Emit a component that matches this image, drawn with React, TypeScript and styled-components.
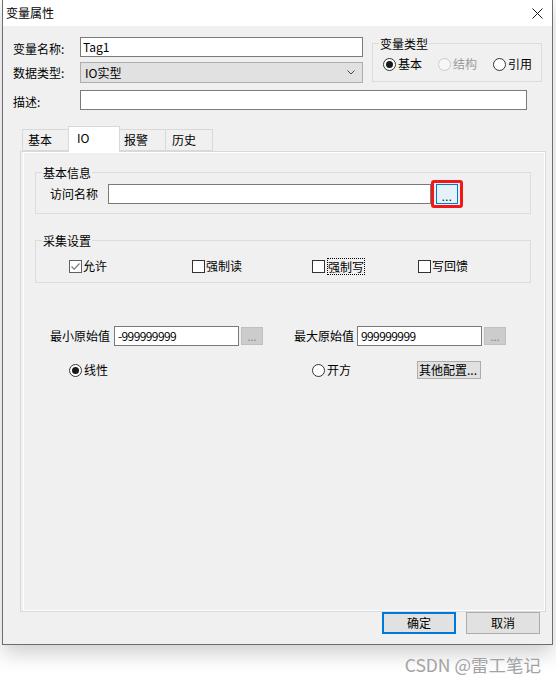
import React from "react";
import styled, { createGlobalStyle } from "styled-components";

const FONT = `"Noto Sans CJK SC", "Microsoft YaHei", "Noto Sans", sans-serif`;

const Global = createGlobalStyle`
  html, body { margin: 0; padding: 0; background: #fff; }
  body { font-family: ${FONT}; font-size: 12px; color: #000; }
  * { box-sizing: border-box; }
`;

const Page = styled.div`
  position: relative;
  width: 556px;
  height: 683px;
  overflow: hidden;
  background: #fff;
  padding-left: 2px;
`;

const Window = styled.div`
  width: 551px;
  height: 645px;
  border: 1px solid #6d6d6d;
  border-top: none;
  background: #f0f0f0;
  box-shadow: 0 8px 20px rgba(0, 0, 0, 0.2);
  display: flex;
  flex-direction: column;
`;

const TitleBar = styled.div`
  height: 26px;
  flex: none;
  background: #fff;
  display: flex;
  align-items: center;
  justify-content: space-between;
  padding: 0 9px 0 3px;
`;

const TitleText = styled.span`
  line-height: 16px;
`;

const Body = styled.div`
  flex: 1;
  display: flex;
  flex-direction: column;
  padding-top: 11px;
`;

const TopArea = styled.div`
  display: flex;
  align-items: flex-start;
  padding-left: 10px;
`;

const FieldColumn = styled.div`
  display: flex;
  flex-direction: column;
  gap: 5px;
`;

const FieldRow = styled.div<{ $mt?: number; $pl?: number }>`
  display: flex;
  align-items: center;
  margin-top: ${(p) => p.$mt ?? 0}px;
  padding-left: ${(p) => p.$pl ?? 0}px;
`;

const FieldLabel = styled.span<{ $w: number; $pt?: number; $ml?: number }>`
  width: ${(p) => p.$w}px;
  flex: none;
  line-height: 16px;
  white-space: nowrap;
  padding-top: ${(p) => p.$pt ?? 0}px;
  margin-left: ${(p) => p.$ml ?? 0}px;
`;

const TextBox = styled.div<{ $w: number; $h?: number; $num?: boolean }>`
  width: ${(p) => p.$w}px;
  height: ${(p) => p.$h ?? 20}px;
  flex: none;
  border: 1px solid #7a7a7a;
  background: #fff;
  padding: 0 3px 0 ${(p) => (p.$num ? 3 : 2)}px;
  display: flex;
  align-items: center;
  line-height: 16px;
  overflow: hidden;
  white-space: nowrap;
  letter-spacing: ${(p) => (p.$num ? "-0.6px" : "0")};
`;

const SelectBox = styled.div`
  width: 283px;
  height: 21px;
  flex: none;
  border: 1px solid #adadad;
  background: #e1e1e1;
  display: flex;
  align-items: center;
  justify-content: space-between;
  padding: 0 7px 0 4px;
  line-height: 16px;
`;

const GroupBox = styled.div<{ $w: number; $h: number; $mt?: number; $ml?: number }>`
  position: relative;
  flex: none;
  width: ${(p) => p.$w}px;
  height: ${(p) => p.$h}px;
  margin-top: ${(p) => p.$mt ?? 0}px;
  margin-left: ${(p) => p.$ml ?? 0}px;
  border: 1px solid #dcdcdc;
`;

const GroupTitle = styled.span`
  position: absolute;
  top: -8px;
  left: 6px;
  padding: 0 1px;
  background: #f0f0f0;
  line-height: 16px;
  white-space: nowrap;
`;

const GroupRow = styled.div<{ $pt: number; $pl: number }>`
  display: flex;
  align-items: center;
  padding: ${(p) => p.$pt}px 0 0 ${(p) => p.$pl}px;
`;

const OptionItem = styled.label<{ $w?: number; $disabled?: boolean; $gap?: number }>`
  display: flex;
  align-items: center;
  gap: ${(p) => p.$gap ?? 2}px;
  width: ${(p) => (p.$w ? `${p.$w}px` : "auto")};
  flex: none;
  line-height: 16px;
  height: 16px;
  white-space: nowrap;
  color: ${(p) => (p.$disabled ? "#9a9a9a" : "#000")};
`;

const RadioCircle = styled.span<{ $on?: boolean; $disabled?: boolean }>`
  width: 13px;
  height: 13px;
  flex: none;
  border-radius: 50%;
  border: 1px solid ${(p) => (p.$disabled ? "#cccccc" : "#333")};
  background: ${(p) => (p.$disabled ? "#f7f7f7" : "#fff")};
  display: flex;
  align-items: center;
  justify-content: center;
  &::after {
    content: "";
    display: ${(p) => (p.$on ? "block" : "none")};
    width: 7px;
    height: 7px;
    border-radius: 50%;
    background: #1a1a1a;
  }
`;

const CheckSquare = styled.span<{ $on?: boolean }>`
  width: 13px;
  height: 13px;
  flex: none;
  border: 1px solid ${(p) => (p.$on ? "#606060" : "#333")};
  background: #fff;
  display: flex;
  align-items: center;
  justify-content: center;
`;

const FocusText = styled.span`
  border: 1px dotted #000;
  line-height: 15px;
  padding: 0;
`;

const TabArea = styled.div`
  margin-top: 16px;
  padding-left: 17px;
  display: flex;
  flex-direction: column;
`;

const TabStrip = styled.div`
  display: flex;
  align-items: flex-end;
  height: 25px;
  padding-left: 2px;
  position: relative;
  z-index: 1;
`;

const Tab = styled.div<{ $w: number; $pl: number; $active?: boolean }>`
  width: ${(p) => p.$w}px;
  height: ${(p) => (p.$active ? 26 : 22)}px;
  margin-bottom: ${(p) => (p.$active ? -1 : 0)}px;
  border: 1px solid #d9d9d9;
  border-bottom: ${(p) => (p.$active ? "none" : "1px solid #d9d9d9")};
  background: ${(p) => (p.$active ? "#ffffff" : "#f0f0f0")};
  padding: 0 0 ${(p) => (p.$active ? 3 : 0)}px ${(p) => p.$pl}px;
  display: flex;
  align-items: center;
  line-height: 16px;
  flex: none;
  & + & {
    margin-left: -1px;
  }
`;

const TabPanel = styled.div`
  width: 526px;
  height: 461px;
  flex: none;
  border: 1px solid #d9d9d9;
  background: #f0f0f0;
  padding-left: 2px;
`;

const TabPage = styled.div`
  height: 100%;
  border: 1px solid #fff;
  padding: 19px 0 0 11px;
  display: flex;
  flex-direction: column;
`;

const RedMark = styled.span`
  display: flex;
  flex: none;
  border: 3px solid #f01818;
  border-radius: 3px;
  padding: 1px 2px;
`;

const BrowseButton = styled.div`
  width: 22px;
  height: 20px;
  border: 1px solid #0078d7;
  background: #e5f1fb;
  display: flex;
  align-items: flex-end;
  justify-content: center;
  font-size: 11px;
  line-height: 14px;
  letter-spacing: 0.5px;
`;

const SmallButton = styled.div`
  width: 22px;
  height: 18px;
  flex: none;
  margin-left: 2px;
  border: 1px solid #c0c0c0;
  background: #cccccc;
  color: #858585;
  display: flex;
  align-items: center;
  justify-content: center;
  font-size: 11px;
  line-height: 14px;
`;

const PushButton = styled.div<{ $w: number }>`
  width: ${(p) => p.$w}px;
  height: 18px;
  flex: none;
  border: 1px solid #adadad;
  background: #e1e1e1;
  padding-left: 1px;
  display: flex;
  align-items: center;
  line-height: 16px;
  white-space: nowrap;
`;

const ButtonRow = styled.div`
  display: flex;
  justify-content: flex-end;
  gap: 10px;
  padding-right: 12px;
`;

const DialogButton = styled.div<{ $primary?: boolean }>`
  width: 74px;
  height: 22px;
  border: ${(p) => (p.$primary ? "2px solid #0078d7" : "1px solid #adadad")};
  background: #e1e1e1;
  display: flex;
  align-items: center;
  justify-content: center;
  line-height: 16px;
`;

const Watermark = styled.span`
  position: absolute;
  right: 15px;
  top: 655px;
  font-size: 17.5px;
  line-height: 20px;
  color: #a3a3a3;
  white-space: nowrap;
`;

const CloseIcon = () => (
  <svg width="11" height="11" viewBox="0 0 11 11">
    <path d="M0.5 0.5 L10.5 10.5 M10.5 0.5 L0.5 10.5" stroke="#1a1a1a" strokeWidth="1" fill="none" />
  </svg>
);

const Chevron = () => (
  <svg width="8" height="5" viewBox="0 0 8 5">
    <path d="M0.5 0.5 L4 4 L7.5 0.5" stroke="#444" strokeWidth="1" fill="none" />
  </svg>
);

const Radio = ({ label, on, disabled, w }: { label: string; on?: boolean; disabled?: boolean; w?: number }) => (
  <OptionItem $w={w} $disabled={disabled}>
    <RadioCircle $on={on} $disabled={disabled} />
    <span>{label}</span>
  </OptionItem>
);

const Check = ({ label, on, w, focus }: { label: string; on?: boolean; w?: number; focus?: boolean }) => (
  <OptionItem $w={w} $gap={focus ? 2 : 1}>
    <CheckSquare $on={on}>
      {on && (
        <svg width="11" height="11" viewBox="0 0 11 11">
          <path d="M1.5 5.5 L4.2 8.2 L9.5 2.5" stroke="#7a7a7a" strokeWidth="1.2" fill="none" />
        </svg>
      )}
    </CheckSquare>
    {focus ? <FocusText>{label}</FocusText> : <span>{label}</span>}
  </OptionItem>
);

export default function App() {
  return (
    <Page>
      <Global />
      <Window>
        <TitleBar>
          <TitleText>变量属性</TitleText>
          <CloseIcon />
        </TitleBar>
        <Body>
          <TopArea>
            <FieldColumn>
              <FieldRow>
                <FieldLabel $w={67} $pt={4}>变量名称:</FieldLabel>
                <TextBox $w={283}>Tag1</TextBox>
              </FieldRow>
              <FieldRow>
                <FieldLabel $w={67}>数据类型:</FieldLabel>
                <SelectBox>
                  <span>IO实型</span>
                  <Chevron />
                </SelectBox>
              </FieldRow>
            </FieldColumn>
            <GroupBox $w={170} $h={39} $mt={6} $ml={9}>
              <GroupTitle>变量类型</GroupTitle>
              <GroupRow $pt={12} $pl={10}>
                <Radio label="基本" on w={55} />
                <Radio label="结构" disabled w={55} />
                <Radio label="引用" w={50} />
              </GroupRow>
            </GroupBox>
          </TopArea>
          <FieldRow $mt={6} $pl={10}>
            <FieldLabel $w={67} $pt={5}>描述:</FieldLabel>
            <TextBox $w={447} />
          </FieldRow>
          <TabArea>
            <TabStrip>
              <Tab $w={47} $pl={5}>基本</Tab>
              <Tab $w={52} $pl={8} $active>IO</Tab>
              <Tab $w={47} $pl={4}>报警</Tab>
              <Tab $w={48} $pl={6}>历史</Tab>
            </TabStrip>
            <TabPanel>
              <TabPage>
                <GroupBox $w={496} $h={42}>
                  <GroupTitle>基本信息</GroupTitle>
                  <GroupRow $pt={7} $pl={14}>
                    <FieldLabel $w={58}>访问名称</FieldLabel>
                    <TextBox $w={323} />
                    <RedMark>
                      <BrowseButton>...</BrowseButton>
                    </RedMark>
                  </GroupRow>
                </GroupBox>
                <GroupBox $w={496} $h={43} $mt={26}>
                  <GroupTitle>采集设置</GroupTitle>
                  <GroupRow $pt={17} $pl={33}>
                    <Check label="允许" on w={123} />
                    <Check label="强制读" w={120} />
                    <Check label="强制写" w={106} focus />
                    <Check label="写回馈" />
                  </GroupRow>
                </GroupBox>
                <FieldRow $mt={43} $pl={15}>
                  <FieldLabel $w={64}>最小原始值</FieldLabel>
                  <TextBox $w={125} $num>-999999999</TextBox>
                  <SmallButton>...</SmallButton>
                  <FieldLabel $w={63} $ml={31}>最大原始值</FieldLabel>
                  <TextBox $w={125} $num>999999999</TextBox>
                  <SmallButton>...</SmallButton>
                </FieldRow>
                <FieldRow $mt={15} $pl={34}>
                  <Radio label="线性" on w={243} />
                  <Radio label="开方" w={105} />
                  <PushButton $w={64}>其他配置...</PushButton>
                </FieldRow>
              </TabPage>
            </TabPanel>
          </TabArea>
          <ButtonRow>
            <DialogButton $primary>确定</DialogButton>
            <DialogButton>取消</DialogButton>
          </ButtonRow>
        </Body>
      </Window>
      <Watermark>CSDN @雷工笔记</Watermark>
    </Page>
  );
}
